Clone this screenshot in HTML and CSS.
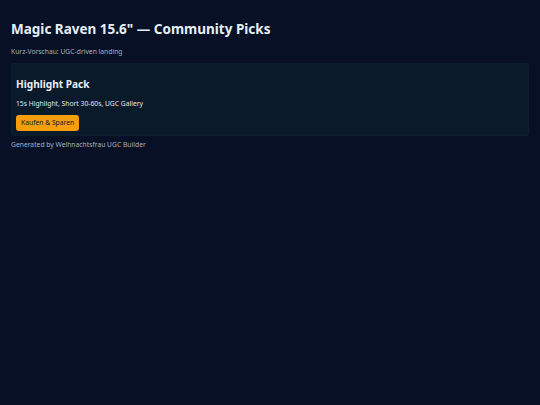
FILE: index.html
```html
<!DOCTYPE html>
<html lang="de">
<head>
<meta charset="utf-8">
<title>Magic Raven 15.6" — Community Picks</title>
<link rel="stylesheet" href="styles.css">
</head>
<body>
<main class="page">
  <h1 class="title">Magic Raven 15.6" — Community Picks</h1>
  <p class="lead">Kurz-Vorschau: UGC-driven landing</p>
  <section class="card">
    <h2 class="card-title">Highlight Pack</h2>
    <p class="card-text">15s Highlight, Short 30-60s, UGC Gallery</p>
    <button class="btn">Kaufen &amp; Sparen</button>
  </section>
  <p class="footer">Generated by Weihnachtsfrau UGC Builder</p>
</main>
</body>
</html>
```
FILE: styles.css
```css
html, body {
  margin: 0;
  padding: 0;
  background: #071024;
  height: 100%;
}
body {
  font-family: "Noto Sans", sans-serif;
  color: #e6edf3;
}
.page {
  padding: 11px;
}
.title {
  margin: 8.5px 0 0;
  font-size: 13.5px;
  line-height: 18px;
  font-weight: 700;
  color: #e8eef5;
}
.lead {
  margin: 9.2px 0 0;
  font-size: 6.75px;
  line-height: 10px;
  color: #a3b1c2;
}
.card {
  margin-top: 6.6px;
  background: #0a1a2a;
  border: 1px solid #0d1e2f;
  border-radius: 3px;
  padding: 12.8px 4px 4.3px;
}
.card-title {
  margin: 0;
  font-size: 10.125px;
  line-height: 14px;
  font-weight: 700;
  color: #e8eef5;
}
.card-text {
  margin: 7.8px 0 0;
  font-size: 6.75px;
  line-height: 10px;
  color: #e1e8ef;
}
.btn {
  display: block;
  margin-top: 6.4px;
  font-family: "Noto Sans", sans-serif;
  font-size: 6.75px;
  line-height: 10px;
  padding: 2.7px 5px;
  border: 0;
  border-radius: 3px;
  background: #f59e0b;
  color: #111827;
}
.footer {
  margin: 4.4px 0 0;
  font-size: 6.75px;
  line-height: 10px;
  color: #a3b1c2;
}
```
